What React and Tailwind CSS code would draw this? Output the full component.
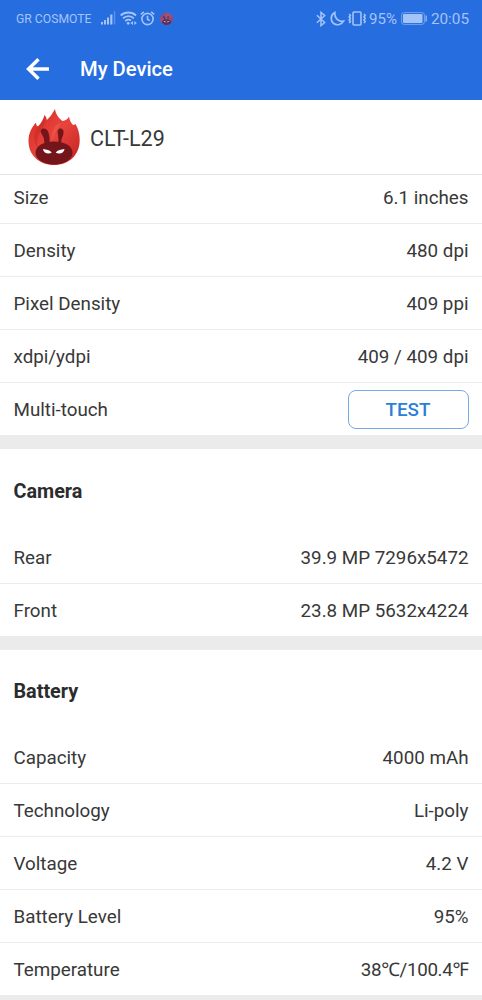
import { clsx } from 'clsx'

const sections = [
  {
    rows: [
      { label: 'Size', value: '6.1 inches' },
      { label: 'Density', value: '480 dpi' },
      { label: 'Pixel Density', value: '409 ppi' },
      { label: 'xdpi/ydpi', value: '409 / 409 dpi' },
      { label: 'Multi-touch', action: 'TEST' },
    ],
  },
  {
    title: 'Camera',
    rows: [
      { label: 'Rear', value: '39.9 MP 7296x5472' },
      { label: 'Front', value: '23.8 MP 5632x4224' },
    ],
  },
  {
    title: 'Battery',
    rows: [
      { label: 'Capacity', value: '4000 mAh' },
      { label: 'Technology', value: 'Li-poly' },
      { label: 'Voltage', value: '4.2 V' },
      { label: 'Battery Level', value: '95%' },
      { label: 'Temperature', value: '38℃/100.4℉', tight: true },
    ],
  },
]

function AntutuLogo({ className }) {
  return (
    <svg viewBox="0 0 52 56" className={className}>
      <defs>
        <linearGradient id="flame" x1="0" y1="0" x2="1" y2="1">
          <stop offset="0" stopColor="#d42a26" />
          <stop offset="0.5" stopColor="#e8443c" />
          <stop offset="1" stopColor="#c4201f" />
        </linearGradient>
      </defs>
      <path
        d="M26 56C11 56 .5 46 .5 32 .5 24 4 18 8 13.500c0 2 .5 3.300 2 4 3-3 5.500-7 6.500-11.500 1.500 1.500 2 3 2.300 5C22.500 8 24.500 4 27 0c.5 5 4 9.500 7.500 12 3-.5 5.500-2 6.500-4.500.5 3 1.500 6 4 8.500 1 0 1.800-.3 2.500-1 3 5 4.200 10 4.200 16C51.700 46 41 56 26 56z"
        fill="url(#flame)"
      />
      <path d="M34.500 14C30 18 26 25 24 33c-1-6 0-11 4-17 2-1 4.500-1.500 6.500-2z" fill="#f06a5c" opacity="0.4" />
      <path d="M10 17.500c3-3 5.500-7 6.500-11.500 4 12-10 18-7 33-4-6-5-15 .5-21.500z" fill="#b51a1c" opacity="0.3" />
      <path d="M16 36c1-5-.5-8-2.500-11.500-1.500-2.500-.5-5 2-5 4.500 0 6.500 5 6.200 15z" fill="#74141b" />
      <path d="M30 35c1-4 .3-7-.2-10.500-.6-3.500.7-5 3-5 3.500.3 3.500 5 1.200 9.500-1 2.500-.8 4-.5 7z" fill="#74141b" />
      <path d="M26 32.500c10 0 18.500 4 18.500 11.500C44.500 51 35 55.500 26 55.500S7.500 51 7.500 44C7.500 36.500 16 32.500 26 32.500z" fill="#74141b" />
      <path d="M15 40c3.500.5 7 1 8.700 3.800-3.200 1.700-8.200.7-8.700-3.800zM36.500 40c-3.500.5-7 1-8.700 3.800 3.200 1.700 8.200.7 8.700-3.800z" fill="#fff" />
    </svg>
  )
}

function SignalIcon() {
  return (
    <svg viewBox="0 0 15 14" className="h-[14px] w-[15px]" fill="currentColor">
      <path d="M0 11h2v2.500H0zM3 9h2v4.500H3zM6 6.500h2v7H6zM9.200 3.500h2.200v10H9.200z" />
      <path d="M12.800 0h1.500v13.500h-1.500z" opacity="0.4" />
    </svg>
  )
}

function WifiIcon() {
  return (
    <svg viewBox="0 0 17 14" className="h-[14px] w-[17px]" fill="none" stroke="currentColor" strokeWidth="1.800">
      <path d="M.7 4.500c4-4 11.300-4 15.300 0M3 7.300c3-3 8-3 10.800 0M5.300 10.200c1.500-1.900 4-2.100 5.700-.7" />
      <circle cx="8.200" cy="12.300" r="1.400" fill="currentColor" stroke="none" />
      <path d="M10.500 12l2.500-2v4zM16.800 12l-2.500-2v4z" fill="currentColor" stroke="none" />
    </svg>
  )
}

function AlarmIcon() {
  return (
    <svg viewBox="0 0 15 15" className="h-[15px] w-[15px]" fill="none" stroke="currentColor" strokeWidth="1.600">
      <circle cx="7.500" cy="8" r="5.600" />
      <path d="M7.500 4.800v3.400l2.300 1.400M.8 3.500L3.800.8M14.200 3.500l-3-2.700" />
    </svg>
  )
}

function BluetoothIcon() {
  return (
    <svg viewBox="0 0 10 16" className="h-4 w-[10px]" fill="none" stroke="currentColor" strokeWidth="1.500">
      <path d="M.9 4.200l7.800 7.300L5 14.600V1.400l3.700 3.100-7.800 7.300" />
    </svg>
  )
}

function MoonIcon() {
  return (
    <svg viewBox="0 0 15 15" className="h-[15px] w-[15px]" fill="none" stroke="currentColor" strokeWidth="1.700">
      <path d="M4.800 1.500C.3 4 .2 9.800 3.700 12.500c3.500 2.500 8 1 9.800-2.300C8 11 4.300 7 4.800 1.500z" />
    </svg>
  )
}

function VibrateIcon() {
  return (
    <svg viewBox="0 0 18 15" className="h-[15px] w-[18px]" fill="none" stroke="currentColor" strokeWidth="1.600">
      <rect x="5" y="1" width="8" height="13" rx="1" />
      <path d="M1.200 3l1.200 1.500L1.200 6l1.200 1.500L1.200 9l1.200 1.500L1.200 12M16 3l1.200 1.500L16 6l1.200 1.500L16 9l1.200 1.500L16 12" />
    </svg>
  )
}

function BatteryIcon() {
  return (
    <svg viewBox="0 0 26 13" className="h-[13px] w-[26px]">
      <rect x=".6" y=".6" width="22.800" height="11.800" rx="2.500" fill="none" stroke="currentColor" opacity="0.600" />
      <rect x="2" y="2" width="19.500" height="9" rx="1" fill="currentColor" />
      <path d="M24.500 3.500h1.200v6h-1.200z" fill="currentColor" />
    </svg>
  )
}

function StatusBar() {
  return (
    <div className="flex h-[37px] items-center justify-between pr-[13px] pl-4 text-[#a4c4f8]">
      <div className="flex items-center">
        <span className="pt-px text-[12.2px]">GR COSMOTE</span>
        <div className="ml-[10px] flex items-center gap-[4px]">
          <SignalIcon />
          <WifiIcon />
          <div className="-ml-px">
            <AlarmIcon />
          </div>
          <AntutuLogo className="ml-px h-[14px] w-[13px] opacity-65" />
        </div>
      </div>
      <div className="flex items-center">
        <BluetoothIcon />
        <div className="ml-[4px] flex items-center gap-[3px]">
          <MoonIcon />
          <VibrateIcon />
        </div>
        <span className="ml-[3px] pt-px text-[15px]">95%</span>
        <div className="ml-[4px]">
          <BatteryIcon />
        </div>
        <span className="ml-[4px] pt-px text-[15.3px]">20:05</span>
      </div>
    </div>
  )
}

function Row({ label, value, action, tight, last }) {
  return (
    <div
      className={clsx(
        'flex items-center justify-between pr-[13.5px] pl-[13.5px]',
        last ? 'h-[52px]' : 'h-[53px] border-b border-[#ececec]'
      )}
    >
      <span className="pt-[3px]">{label}</span>
      {action ? (
        <button className="h-[39px] w-[121px] rounded-lg border border-[#77a9e4] pt-[3px] text-[18.8px] font-medium text-[#2b7fd6]">
          {action}
        </button>
      ) : (
        <span className={clsx('pt-[3px]', tight && 'tracking-[-0.35px]')}>{value}</span>
      )}
    </div>
  )
}

export default function App() {
  return (
    <div className="flex h-[1000px] w-[482px] flex-col overflow-hidden bg-white font-['Roboto','Noto_Sans',sans-serif] text-[#383838]">
      <header className="h-[100px] shrink-0 bg-[#266de0]">
        <StatusBar />
        <div className="flex h-[63px] items-center pl-[26px] text-white">
          <svg viewBox="0 0 24 22" className="h-[22px] w-6" fill="none" stroke="currentColor" strokeWidth="3.400">
            <path d="M12.500 1.200L2.500 11l10 9.800M2.500 11H23" />
          </svg>
          <h1 className="ml-[30px] pt-[2px] text-[20.2px] font-medium">My Device</h1>
        </div>
      </header>
      <div className="flex h-[75px] shrink-0 items-center border-b border-[#e4e4e4] pl-7">
        <AntutuLogo className="h-14 w-[52px]" />
        <span className="ml-[10px] pt-[4px] text-[21.5px]">CLT-L29</span>
      </div>
      <main className="min-h-0 flex-1 overflow-hidden text-[18.8px]">
        <div className="-mt-1">
          {sections.map((section, i) => (
            <section key={i} className="border-b-[14px] border-[#ebebeb]">
              {section.title && (
                <h2
                  className={clsx(
                    'flex items-center pt-[3px] pl-[13.5px] text-[19.8px] font-bold text-[#2c2c2c]',
                    i === 1 ? 'h-[82px]' : 'h-[81px]'
                  )}
                >
                  {section.title}
                </h2>
              )}
              {section.rows.map((row, j) => (
                <Row key={row.label} {...row} last={j === section.rows.length - 1} />
              ))}
            </section>
          ))}
        </div>
      </main>
    </div>
  )
}
